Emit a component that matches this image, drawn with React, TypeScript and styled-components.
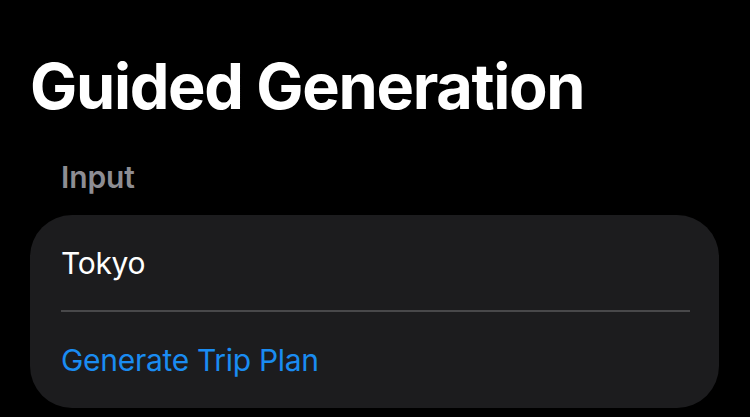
import styled, { createGlobalStyle } from "styled-components";

const GlobalStyle = createGlobalStyle`
  html, body {
    margin: 0;
    padding: 0;
    background: #000;
  }
  body {
    font-family: Inter, "Noto Sans", "Liberation Sans", sans-serif;
    -webkit-font-smoothing: antialiased;
  }
`;

const Page = styled.div`
  width: 750px;
  height: 417px;
  box-sizing: border-box;
  padding: 48px 31px 0 30px;
  background: #000;
  overflow: hidden;
`;

const Title = styled.h1`
  margin: 0;
  color: #fff;
  font-size: 63px;
  font-weight: 700;
  line-height: 76px;
  letter-spacing: -1.3px;
`;

const SectionHeader = styled.div`
  margin: 36px 0 0 31px;
  color: #8d8d93;
  font-size: 30px;
  font-weight: 600;
  line-height: 34px;
  letter-spacing: -0.1px;
`;

const Card = styled.div`
  margin-top: 21px;
  background: #1c1c1e;
  border-radius: 42px;
  padding-left: 31px;
  display: flex;
  flex-direction: column;
`;

const Row = styled.div<{ $height: number }>`
  display: flex;
  align-items: center;
  height: ${({ $height }) => $height}px;
`;

const Divider = styled.div`
  height: 1.5px;
  margin-right: 29px;
  background: #48484a;
`;

const Value = styled.span<{ $accent?: boolean }>`
  color: ${({ $accent }) => ($accent ? "#1a8cf2" : "#fff")};
  font-size: 30px;
  font-weight: 400;
  letter-spacing: -0.3px;
`;

export default function App() {
  return (
    <>
      <GlobalStyle />
      <Page>
        <Title>Guided Generation</Title>
        <SectionHeader>Input</SectionHeader>
        <Card>
          <Row $height={95}>
            <Value>Tokyo</Value>
          </Row>
          <Divider />
          <Row $height={96}>
            <Value $accent>Generate Trip Plan</Value>
          </Row>
        </Card>
      </Page>
    </>
  );
}
